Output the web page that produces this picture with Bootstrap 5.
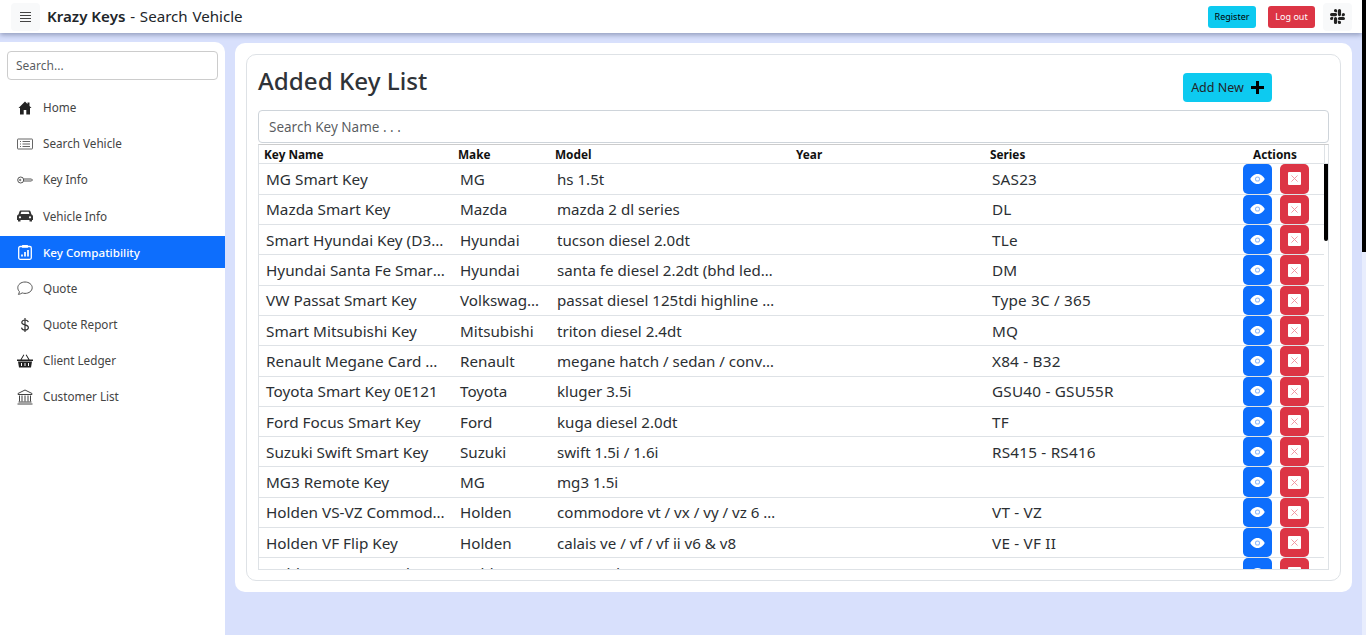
<!DOCTYPE html>
<html lang="en">
<head>
<meta charset="utf-8">
<title>Krazy Keys</title>
<link rel="stylesheet" href="https://cdn.jsdelivr.net/npm/bootstrap@5.3.0/dist/css/bootstrap.min.css">
<style>
html,body{height:100%;overflow:hidden}
body{font-family:"Noto Sans","Open Sans",sans-serif;background:#d8e0fc;color:#212529}
.app-frame{height:635px;overflow:hidden;background:#d8e0fc}
.app-inner{flex:1;min-width:0;overflow:hidden}
.rail-page{width:4px;flex:none;background:#e8edfd}
.rail-page i{display:block;height:252px;background:#000}
.rail-body{width:4px;flex:none;background:#fff}
.rail-body i{display:block;height:77px;background:#000;border-radius:0 0 2px 2px}
.top-bar{height:33px;background:#fff;box-shadow:0 2px 5px rgba(60,70,110,.45);padding:3px 10px 3px 11px;position:relative;z-index:2}
.sq-btn{width:29px;height:28px;background:#f8f9fa;border-radius:4px;border:0;padding:0}
.brand-txt{font-size:15.1px;margin-left:7px;word-spacing:.9px}
.brand-txt b{font-weight:600;word-spacing:0}
.mini-btn{height:22px;width:48px;font-size:9px;padding:0;border-radius:3px;border:0;line-height:22px}
.mini-btn.reg{background:#0dcaf0;color:#000}
.mini-btn.out{background:#dc3545;color:#fff;margin-left:12px;width:47px}
.layout{padding-top:9px;align-items:flex-start}
.side-col{width:225px;height:593px;background:#fff;border-top-right-radius:10px;padding:9px 7px 0 7px;flex:none}
.side-search{height:29px;font-size:12px;padding:0 8px;border-radius:4px;border-color:#ccc}
.side-links{margin:10px -7px 0;list-style:none;padding:0}
.side-links a{height:36.1px;display:flex;align-items:center;padding-left:17px;font-size:11.7px;color:#444;text-decoration:none}
.side-links a svg{width:16px;height:16px;margin-right:10px;flex:none}
.side-links a.on{background:#0d6efd;color:#fff;height:32px;margin:2px 0 2px;font-weight:500;font-size:11.6px}
.main-panel{margin:1px 0 0 10px;width:1117px;height:549px;background:#fff;border-radius:10px;padding:11px}
.inner-panel{height:527px;border:1px solid #dee2e6;border-radius:10px;padding:0 11px 0 11px}
.page-head{height:55px;align-items:flex-start}
.page-title{font-size:24.2px;font-weight:500;margin:8px 0 0;color:#2f3338;line-height:36px}
.add-btn{margin:18px 57px 0 0;width:89px;height:29px;background:#0dcaf0;border:0;border-radius:4px;color:#212529;font-size:12.5px;padding:2px 0 0;display:flex;align-items:center;justify-content:center;gap:7px}
.add-btn svg{margin-top:-3px}
.key-search{height:33px;font-size:13.5px;padding:0 10px;border-radius:4px;border-color:#ced4da}
.tbl-wrap{margin-top:1px;height:426px;border:1px solid #dee2e6;border-top-color:#ccc;display:flex;flex-direction:column;overflow:hidden}
.grid-tbl{table-layout:fixed;width:1065px;border-collapse:collapse;margin:0}
.grid-tbl .c1{width:194px}.grid-tbl .c2{width:97px}.grid-tbl .c3{width:241px}.grid-tbl .c4{width:194px}.grid-tbl .c5{width:253px}.grid-tbl .c6{width:86px}
.head-row{height:19px;border-bottom:1px solid #dee2e6;flex:none;display:flex}
.head-row .grid-tbl th{font-size:11.8px;font-weight:700;padding:0 0 0 5px;line-height:19px;color:#111;white-space:nowrap}
.head-row .grid-tbl th.act{padding-left:15px}
.head-gap{flex:1;border-left:1px solid #dee2e6;height:19px}
.body-row{flex:1;min-height:0;display:flex}
.body-clip{flex:1;min-width:0;overflow:hidden}
.grid-tbl td{height:30.3px;padding:0 7px;font-size:15.3px;white-space:nowrap;overflow:hidden;text-overflow:ellipsis;border-bottom:1px solid #dee2e6;line-height:20px;color:#2b2f33;vertical-align:middle}
.grid-tbl td:nth-child(2){font-size:15.2px}
.grid-tbl td:nth-child(3){font-size:15.1px;padding-right:14px}
.grid-tbl td:nth-child(5){letter-spacing:.2px}
.grid-tbl td.acts{padding:0 0 0 5px;overflow:visible}
.act-pair{display:flex;gap:8px;height:29.3px}
.act-b{width:29px;height:29.3px;border:0;padding:0;border-radius:5px;display:flex;align-items:center;justify-content:center}
.act-b.see{background:#0d6efd}
.act-b.del{background:#dc3545}
.x-box{width:13px;height:13px;background:#fff;border-radius:1px;display:flex;align-items:center;justify-content:center}
</style>
</head>
<body>
<div class="app-frame d-flex">
<div class="app-inner">
<header class="top-bar d-flex align-items-center">
  <button class="sq-btn d-flex align-items-center justify-content-center" aria-label="Menu">
    <svg width="11" height="10" viewBox="0 0 11 10"><path d="M0 .5h11M0 3.500h11M0 6.500h11M0 9.500h11" stroke="#444" stroke-width="1"/></svg>
  </button>
  <div class="brand-txt"><b>Krazy Keys</b> - Search Vehicle</div>
  <div class="ms-auto d-flex align-items-center">
    <button class="mini-btn reg">Register</button>
    <button class="mini-btn out">Log out</button>
    <button class="sq-btn ms-2 d-flex align-items-center justify-content-center" aria-label="Slack">
      <svg width="15" height="15" viewBox="0 0 16 16" fill="#222"><path d="M3.400 10.100a1.700 1.700 0 1 1-1.700-1.700h1.700zM4.200 10.100a1.700 1.700 0 0 1 3.400 0v4.200a1.700 1.700 0 0 1-3.400 0zM5.900 3.400a1.700 1.700 0 1 1 1.700-1.700v1.700zM5.900 4.200a1.700 1.700 0 0 1 0 3.400H1.700a1.700 1.700 0 0 1 0-3.400zM12.600 5.900a1.700 1.700 0 1 1 1.700 1.700h-1.700zM11.800 5.900a1.700 1.700 0 0 1-3.400 0V1.700a1.700 1.700 0 0 1 3.400 0zM10.100 12.600a1.700 1.700 0 1 1-1.700 1.700v-1.700zM10.100 11.800a1.700 1.700 0 0 1 0-3.400h4.200a1.700 1.700 0 0 1 0 3.400z"/></svg>
    </button>
  </div>
</header>
<div class="layout d-flex">
  <aside class="side-col">
    <input class="form-control side-search" placeholder="Search...">
    <ul class="side-links">
      <li><a href="#"><svg viewBox="0 0 16 16" fill="#222"><path d="M8 1.500 1.500 8H3v6.500h3.700V10h2.600v4.500H13V8h1.500L12.500 6V2.500h-2v1.500z"/></svg>Home</a></li>
      <li><a href="#"><svg viewBox="0 0 16 16" fill="none" stroke="#666"><rect x=".5" y="3" width="15" height="10" rx=".5"/><path d="M3 5.500h1M5.500 5.500H13M3 8h1M5.500 8H13M3 10.500h1M5.500 10.500H13"/></svg>Search Vehicle</a></li>
      <li><a href="#"><svg viewBox="0 0 16 16" fill="none" stroke="#555"><circle cx="3.700" cy="8" r="3"/><path d="M6.700 7h7.800l1 1-1 1H6.700"/><circle cx="3.200" cy="8" r=".7"/></svg>Key Info</a></li>
      <li><a href="#"><svg viewBox="0 0 16 16" fill="#333"><path d="M3.700 2.500h8.600c.6 0 1 .4 1.200.9l1 3.100c.8.400 1.500 1 1.500 2V12h-1v1.500h-2.500V12h-9v1.500H1V12H0V8.500c0-1 .7-1.600 1.500-2l1-3.100c.2-.5.600-.9 1.200-.9zM3.600 6h8.800l-.7-2.300H4.300zM3 8.200a1.100 1.100 0 1 0 0 2.200 1.100 1.100 0 0 0 0-2.200zm10 0a1.100 1.100 0 1 0 0 2.200 1.100 1.100 0 0 0 0-2.200z"/></svg>Vehicle Info</a></li>
      <li><a href="#" class="on"><svg viewBox="0 0 16 16" fill="none" stroke="#fff" stroke-width="1.300"><rect x="1.700" y="2.500" width="12.600" height="12.800" rx="1.500"/><rect x="5" y="1" width="6" height="2.800" fill="#fff" stroke="none" rx=".5"/><path d="M5 12.500v-2M8 12.500V8M11 12.500V6" stroke-width="1.700"/></svg>Key Compatibility</a></li>
      <li><a href="#"><svg viewBox="0 0 16 16" fill="none" stroke="#555"><path d="M8 2c4 0 7.200 2.500 7.200 5.700S12 13.400 8 13.400c-1 0-2-.2-2.800-.5-.8.600-2.300 1.300-3.800 1.500.5-.8 1-1.800 1-2.800C1.400 10.600.800 9.200.800 7.700.800 4.500 4 2 8 2z"/></svg>Quote</a></li>
      <li><a href="#"><svg viewBox="0 0 16 16" fill="none" stroke="#333" stroke-width="1.200"><path d="M11.300 5.200C11 3.800 9.700 3 8 3 6.200 3 4.800 3.900 4.800 5.400c0 3.300 6.600 1.800 6.600 5.200 0 1.600-1.500 2.500-3.400 2.500s-3.200-.9-3.500-2.400M8 1v14"/></svg>Quote Report</a></li>
      <li><a href="#"><svg viewBox="0 0 16 16" fill="#222"><path d="M0 6.500h16V8H0zM1 8.500h14l-1 6H2zM3.500 6.500l3-5 .8.500-2.700 4.500zM12.500 6.500l-3-5-.8.500 2.700 4.500z"/><path d="M4.500 10v3M8 10v3M11.500 10v3" stroke="#fff"/></svg>Client Ledger</a></li>
      <li><a href="#"><svg viewBox="0 0 16 16" fill="none" stroke="#444"><path d="M8 1 1 4.500v1h14v-1zM2.500 6.500v6M5 6.500v6M8 6.500v6M11 6.500v6M13.500 6.500v6M1.500 13h13M.5 15h15"/></svg>Customer List</a></li>
    </ul>
  </aside>
  <main class="main-panel">
    <div class="inner-panel">
      <div class="page-head d-flex justify-content-between">
        <h2 class="page-title">Added Key List</h2>
        <button class="add-btn">Add New <svg width="13" height="13" viewBox="0 0 13 13" fill="#000"><path d="M5 0h3v5h5v3H8v5H5V8H0V5h5z"/></svg></button>
      </div>
      <input class="form-control key-search" placeholder="Search Key Name . . .">
      <div class="tbl-wrap">
        <div class="head-row">
          <table class="grid-tbl"><colgroup><col class="c1"><col class="c2"><col class="c3"><col class="c4"><col class="c5"><col class="c6"></colgroup>
            <thead><tr><th>Key Name</th><th>Make</th><th>Model</th><th>Year</th><th>Series</th><th class="act">Actions</th></tr></thead>
          </table>
          <div class="head-gap"></div>
        </div>
        <div class="body-row">
          <div class="body-clip">
            <table class="grid-tbl"><colgroup><col class="c1"><col class="c2"><col class="c3"><col class="c4"><col class="c5"><col class="c6"></colgroup>
              <tbody id="rows"></tbody>
            </table>
          </div>
          <div class="rail-body"><i></i></div>
        </div>
      </div>
    </div>
  </main>
</div>
</div>
<div class="rail-page"><i></i></div>
</div>
<script>
var data=[["MG Smart Key","MG","hs 1.5t","SAS23"],["Mazda Smart Key","Mazda","mazda 2 dl series","DL"],["Smart Hyundai Key (D3 Model)","Hyundai","tucson diesel 2.0dt","TLe"],["Hyundai Santa Fe Smart Key","Hyundai","santa fe diesel 2.2dt (bhd ledge model)","DM"],["VW Passat Smart Key","Volkswagen","passat diesel 125tdi highline / comfort","Type 3C / 365"],["Smart Mitsubishi Key","Mitsubishi","triton diesel 2.4dt","MQ"],["Renault Megane Card Key","Renault","megane hatch / sedan / convertible 2.0","X84 - B32"],["Toyota Smart Key 0E121","Toyota","kluger 3.5i","GSU40 - GSU55R"],["Ford Focus Smart Key","Ford","kuga diesel 2.0dt","TF"],["Suzuki Swift Smart Key","Suzuki","swift 1.5i / 1.6i","RS415 - RS416"],["MG3 Remote Key","MG","mg3 1.5i",""],["Holden VS-VZ Commodore Key","Holden","commodore vt / vx / vy / vz 6 cylinder","VT - VZ"],["Holden VF Flip Key","Holden","calais ve / vf / vf ii v6 & v8","VE - VF II"],["Holden VE Commodore Key","Holden","commodore ute / sportwagon / ss","WM - WN II"]];
var eye='<svg width="15" height="10" viewBox="0 0 16 11"><path d="M8 0C4 0 1.300 3 0 5.500 1.300 8 4 11 8 11s6.700-3 8-5.500C14.700 3 12 0 8 0z" fill="#fff"/><circle cx="8" cy="5.500" r="2.800" fill="#8db8fb"/><circle cx="8" cy="5.500" r="1.700" fill="#fff"/></svg>';
var ex='<span class="x-box"><svg width="7" height="7" viewBox="0 0 8 8"><path d="M.5.500l7 7M7.500.500l-7 7" stroke="#f08c98" stroke-width="1"/></svg></span>';
document.getElementById('rows').innerHTML=data.map(function(r){
 return '<tr><td>'+r[0].replace('&','&amp;')+'</td><td>'+r[1]+'</td><td>'+r[2].replace('&','&amp;')+'</td><td></td><td>'+r[3]+'</td><td class="acts"><div class="act-pair"><button class="act-b see" aria-label="View">'+eye+'</button><button class="act-b del" aria-label="Delete">'+ex+'</button></div></td></tr>';
}).join('');
</script>
<script src="https://cdn.jsdelivr.net/npm/bootstrap@5.3.0/dist/js/bootstrap.bundle.min.js"></script>
</body>
</html>
